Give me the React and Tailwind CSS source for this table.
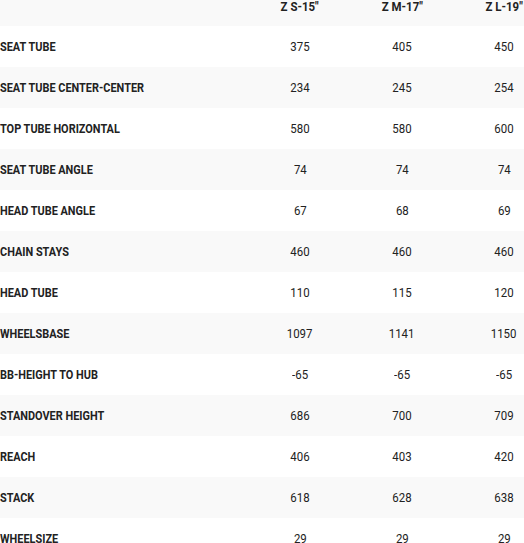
const sizes = ['Z S-15"', 'Z M-17"', 'Z L-19"']

const rows = [
  ['SEAT TUBE', '375', '405', '450'],
  ['SEAT TUBE CENTER-CENTER', '234', '245', '254'],
  ['TOP TUBE HORIZONTAL', '580', '580', '600'],
  ['SEAT TUBE ANGLE', '74', '74', '74'],
  ['HEAD TUBE ANGLE', '67', '68', '69'],
  ['CHAIN STAYS', '460', '460', '460'],
  ['HEAD TUBE', '110', '115', '120'],
  ['WHEELSBASE', '1097', '1141', '1150'],
  ['BB-HEIGHT TO HUB', '-65', '-65', '-65'],
  ['STANDOVER HEIGHT', '686', '700', '709'],
  ['REACH', '406', '403', '420'],
  ['STACK', '618', '628', '638'],
  ['WHEELSIZE', '29', '29', '29'],
]

export default function App() {
  return (
    <div className="w-[524px] h-[543px] overflow-hidden bg-white text-[#222] font-['Roboto',sans-serif]">
      <div className="w-[555px]">
        <div className="grid grid-cols-[249px_102px_102px_102px] h-[26px] bg-[#f9f9f9] text-[13px] font-bold leading-[14px]">
          <div />
          {sizes.map((s) => (
            <div key={s} className="text-center">
              <span className="inline-block [transform:scaleX(0.88)]">{s}</span>
            </div>
          ))}
        </div>
        {rows.map((r, i) => (
          <div
            key={r[0]}
            className={`grid grid-cols-[249px_102px_102px_102px] h-[41px] items-center leading-[15px] ${i % 2 ? 'bg-[#f9f9f9]' : 'bg-white'}`}
          >
            <div className="text-[13px] font-bold whitespace-nowrap">
              <span className="inline-block origin-left [transform:scaleX(0.84)]">{r[0]}</span>
            </div>
            {r.slice(1).map((v, j) => (
              <div key={j} className="text-center text-[13px]">
                <span className="inline-block [transform:scaleX(0.88)]">{v}</span>
              </div>
            ))}
          </div>
        ))}
      </div>
    </div>
  )
}
